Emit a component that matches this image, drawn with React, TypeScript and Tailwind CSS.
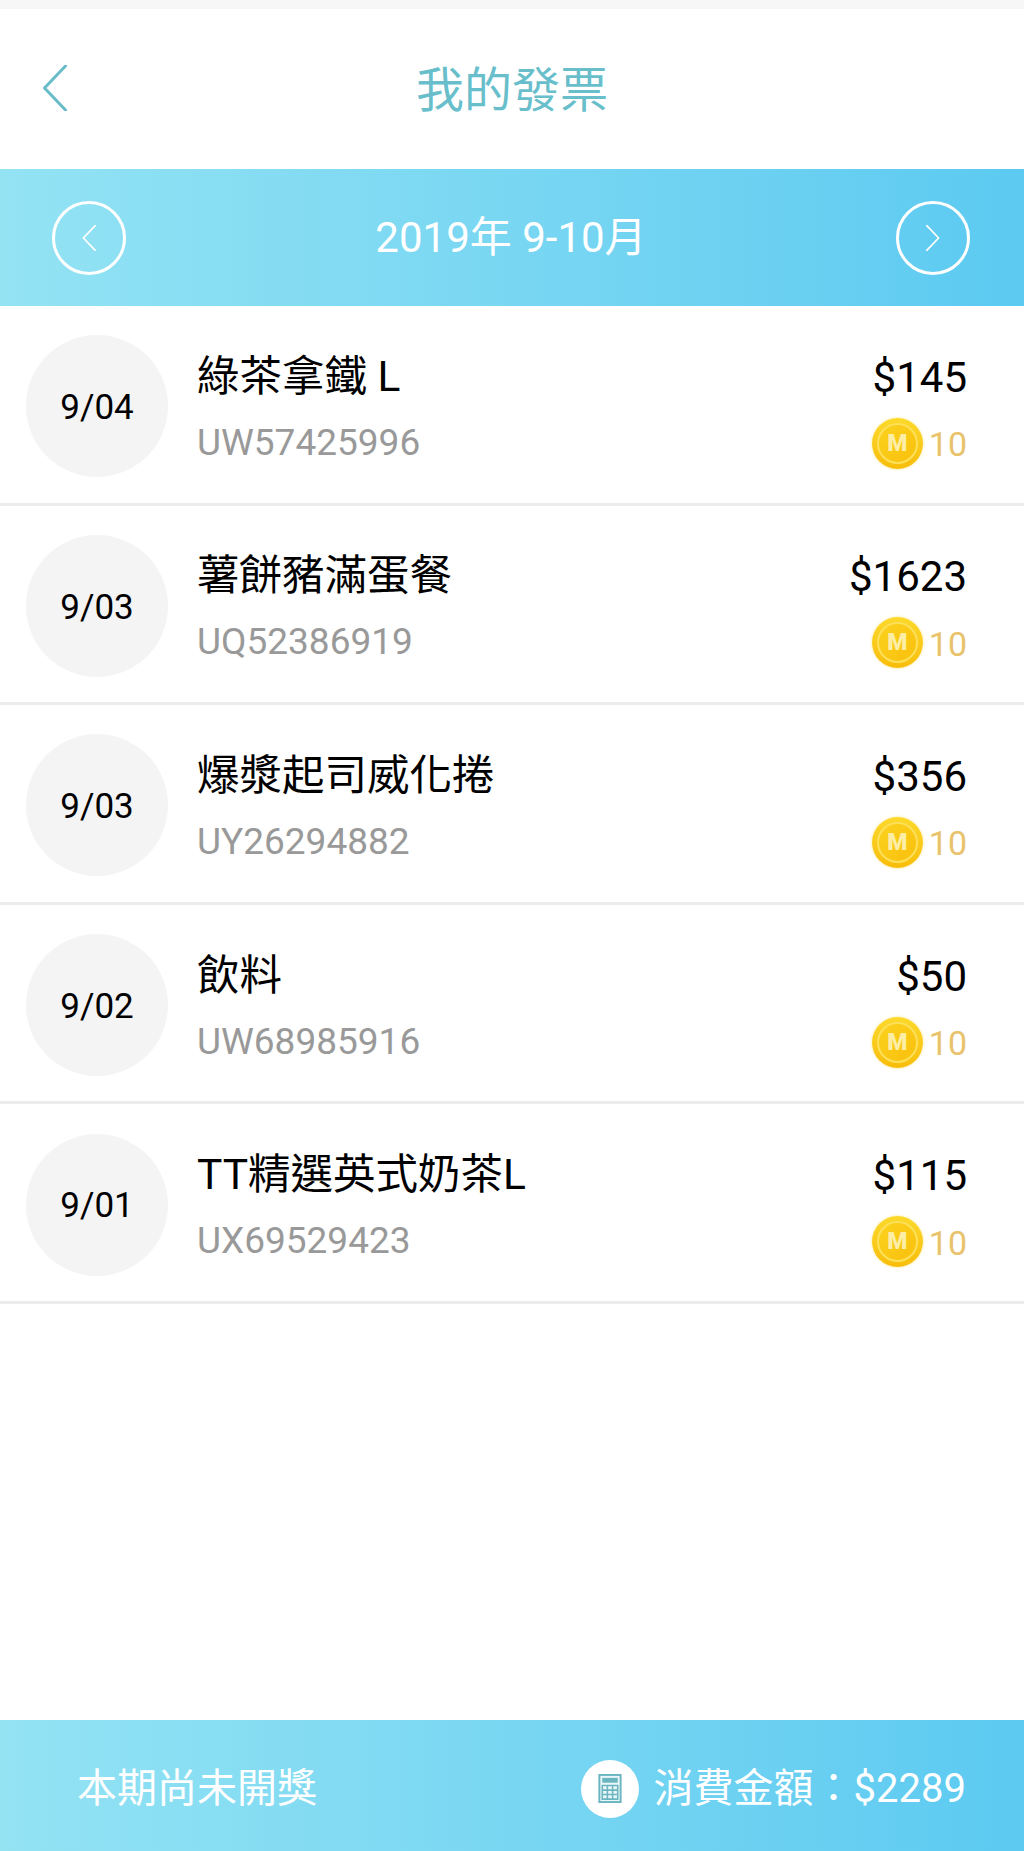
const FONT = "font-['Roboto','Noto_Sans_CJK_TC',sans-serif]";

interface Invoice {
  date: string;
  name: string;
  code: string;
  price: string;
}

const invoices: Invoice[] = [
  { date: "9/04", name: "綠茶拿鐵 L", code: "UW57425996", price: "$145" },
  { date: "9/03", name: "薯餅豬滿蛋餐", code: "UQ52386919", price: "$1623" },
  { date: "9/03", name: "爆漿起司威化捲", code: "UY26294882", price: "$356" },
  { date: "9/02", name: "飲料", code: "UW68985916", price: "$50" },
  { date: "9/01", name: "TT精選英式奶茶L", code: "UX69529423", price: "$115" },
];

function Chevron({ dir, className }: { dir: "left" | "right"; className: string }) {
  return (
    <svg viewBox="0 0 24 46" fill="none" className={className}>
      <path
        d={dir === "left" ? "M23 1 L2 23 L23 45" : "M1 1 L22 23 L1 45"}
        stroke="currentColor"
        strokeWidth="3"
        strokeLinecap="round"
        strokeLinejoin="round"
      />
    </svg>
  );
}

function Coin() {
  return (
    <div className="flex h-[51px] w-[51px] items-center justify-center rounded-full bg-gradient-to-b from-[#fcd92a] to-[#f8bd08] shadow-[0_0_3px_rgba(250,215,60,0.6)]">
      <div className="flex h-[41px] w-[41px] items-center justify-center rounded-full border-2 border-[#fde05a] bg-gradient-to-br from-[#fbd21d] to-[#f9c00c]">
        <span className="text-[23px] leading-none font-black text-[#fdeea6]">M</span>
      </div>
    </div>
  );
}

function CalculatorIcon() {
  return (
    <svg viewBox="0 0 24 30" className="h-[29px] w-[24px]" fill="none">
      <rect x="1" y="1" width="22" height="28" fill="#eaf7f8" stroke="#6bb5c0" strokeWidth="2" />
      <rect x="4" y="4" width="16" height="5" fill="#6bb5c0" />
      <path d="M4 12h16v14H4z M9.3 12v14 M14.7 12v14 M4 16.7h16 M4 21.3h16" stroke="#6bb5c0" strokeWidth="1.6" />
    </svg>
  );
}

function InvoiceRow({ item }: { item: Invoice }) {
  return (
    <div className="flex h-[199.6px] items-center border-b-[3px] border-[#ececec] pt-[4px] pr-[57px] pl-[26px]">
      <div className="flex h-[142px] w-[142px] shrink-0 items-center justify-center rounded-full bg-[#f4f4f4] pt-[4px] text-[35px] text-black">
        {item.date}
      </div>
      <div className="mt-[4px] ml-[29px] flex flex-1 flex-col">
        <div className="h-[50px] text-[42.5px] leading-[50px] text-black">{item.name}</div>
        <div className="mt-[19px] text-[37px] leading-[44px] text-[#999999]">{item.code}</div>
      </div>
      <div className="mt-[9px] flex flex-col items-end">
        <div className="text-[42px] leading-[50px] text-black">{item.price}</div>
        <div className="mt-[15px] flex items-center gap-[6px]">
          <Coin />
          <span className="mt-[2px] text-[34px] leading-none text-[#e8c36c]">10</span>
        </div>
      </div>
    </div>
  );
}

export default function App() {
  return (
    <div className={`flex h-[1851px] w-[1024px] flex-col bg-white ${FONT}`}>
      <div className="h-[9px] bg-[#f7f7f7]" />

      {/* Header */}
      <div className="grid h-[160px] grid-cols-[1fr_auto_1fr] items-center pb-[2px]">
        <div className="pl-[42px] text-[#68bcc9]">
          <Chevron dir="left" className="h-[46px] w-[25px]" />
        </div>
        <h1 className="mt-[5px] text-[48px] leading-none font-normal text-[#68bfcb]">我的發票</h1>
        <div />
      </div>

      {/* Period */}
      <div className="flex h-[137px] items-center justify-between bg-gradient-to-r from-[#93e3f3] to-[#5ccaf1] pr-[54px] pl-[52px] text-white">
        <div className="flex h-[74px] w-[74px] items-center justify-center rounded-full border-[3px] border-white">
          <Chevron dir="left" className="h-[26px] w-[14px]" />
        </div>
        <div className="mt-[1px] text-[42px] leading-none">2019年 9-10月</div>
        <div className="flex h-[74px] w-[74px] items-center justify-center rounded-full border-[3px] border-white">
          <Chevron dir="right" className="h-[26px] w-[14px]" />
        </div>
      </div>

      {/* List */}
      <div className="flex-1">
        {invoices.map((item, i) => (
          <InvoiceRow key={i} item={item} />
        ))}
      </div>

      {/* Footer */}
      <div className="flex h-[131px] items-center justify-between bg-gradient-to-r from-[#93e3f3] to-[#5ccaf1] pt-[6px] pr-[58px] pl-[77px] text-white">
        <div className="mt-[1px] text-[40px] leading-none">本期尚未開獎</div>
        <div className="flex items-center gap-[15px]">
          <div className="flex h-[58px] w-[58px] items-center justify-center rounded-full bg-white">
            <CalculatorIcon />
          </div>
          <span className="text-[40px] leading-none">消費金額：$2289</span>
        </div>
      </div>
    </div>
  );
}
